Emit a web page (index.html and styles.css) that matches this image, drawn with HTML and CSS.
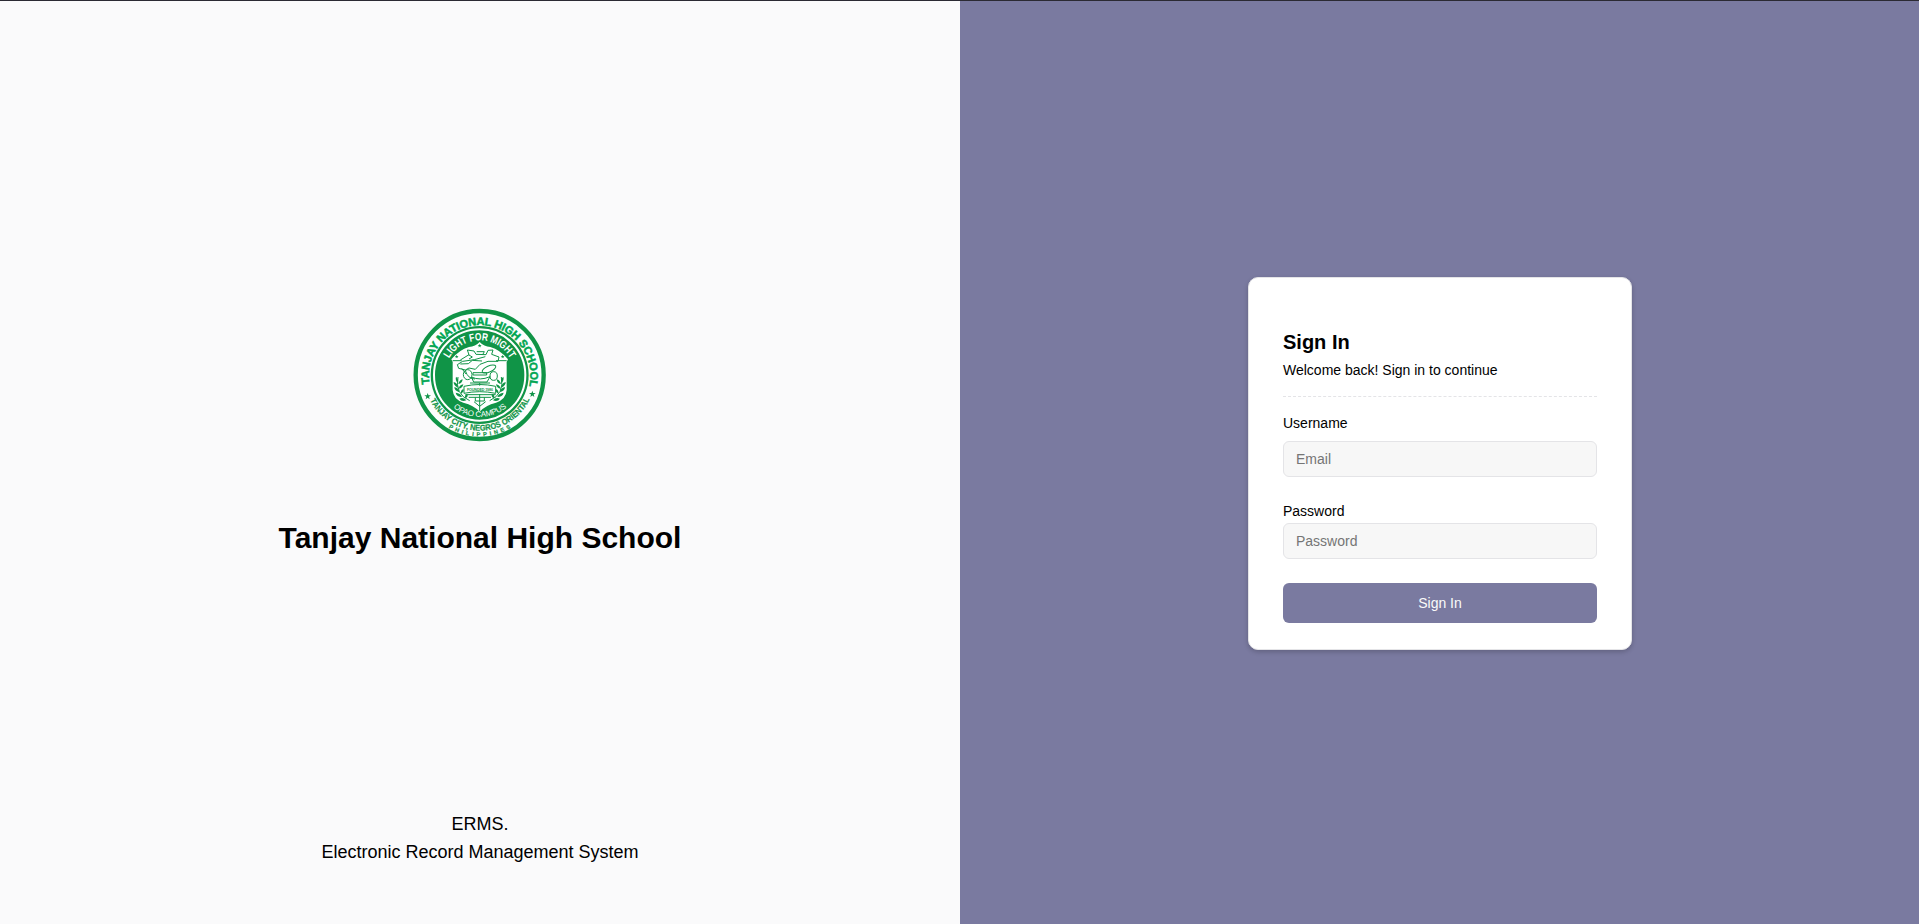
FILE: index.html
```html
<!DOCTYPE html>
<html lang="en">
<head>
<meta charset="utf-8">
<title>Tanjay National High School - Sign In</title>
<link rel="stylesheet" href="styles.css">
</head>
<body>
<main class="page">
  <section class="brand">
    <svg class="seal" viewBox="36 21 408 408" role="img" aria-label="School seal">
      <defs>
        <path id="arc-name" d="M90.500 260A152 152 0 1 1 387.500 260"/>
        <path id="arc-motto" d="M135 225A104 104 0 0 1 343 225"/>
        <path id="arc-city" d="M72 225A167 167 0 0 0 406 225"/>
        <path id="arc-country" d="M55 225A184 184 0 0 0 423 225"/>
        <path id="arc-campus" d="M113 225A126 126 0 0 0 365 225"/>
        <path id="star" d="M0-10 2.500-3H10L4 1.500 6 9 0 4.500-6 9-4 1.500-10-3H-2.500Z"/>
      </defs>
      <circle class="seal-paper seal-ring" cx="239" cy="225" r="192"/>
      <circle class="seal-green" cx="239" cy="225" r="147"/>
      <circle class="seal-gap" cx="239" cy="225" r="137"/>
      <path class="seal-white" d="M239 126Q226 140 207 141Q178 149 154 178Q160 185 158 196V270Q160 298 190 308Q222 316 239 335Q256 316 288 308Q318 298 320 270V196Q318 185 324 178Q300 149 271 141Q252 140 239 126Z"/>
      <g class="seal-line">
        <path d="M158 182H185M288 182H320"/>
        <path d="M181 180 207 164 202 150 222 153 228 163 258 164 264 151 279 150 275 163 297 171 294 184 264 184 240 193 226 208 207 204 196 210 176 205 172 194 188 184 223 179 256 170"/>
        <path d="M181 192 205 191 217 181 246 183M205 164 217 171 207 177M230 155 253 155 248 164M185 205 198 222M196 212Q204 237 225 237"/>
        <ellipse cx="267" cy="207" rx="22" ry="9" transform="rotate(-24 267 207)"/>
        <ellipse cx="203" cy="224" rx="13" ry="15"/><ellipse cx="281" cy="228" rx="11" ry="13"/>
        <path d="M219 218H260V225H219ZM214 231Q240 243 270 230L261 246H221Z"/>
        <path d="M192 259Q239 248 287 259V280Q239 270 192 280ZM239 249V257M210 249H270"/>
        <path d="M196 284H287M206 292H273M239 282V333M222 305 239 319 257 305M226 292V303H253V292"/>
        <path d="M174 231Q164 282 209 302M304 231Q314 282 269 302"/>
      </g>
      <g class="seal-leaves">
        <path d="M173 249Q165 240 168 230Q177 237 173 249M174 263Q160 256 161 246Q174 250 174 263M178 277Q163 272 163 261Q177 264 178 277M186 291Q170 291 167 278Q182 279 186 291M199 301Q185 307 178 296Q190 290 199 301M175 252Q178 240 188 238Q187 250 175 252M176 266Q179 254 190 253Q188 265 176 266M183 281Q181 271 190 267Q194 275 183 281M196 295Q192 285 202 282Q206 290 196 295"/>
        <path transform="matrix(-1 0 0 1 478 0)" d="M173 249Q165 240 168 230Q177 237 173 249M174 263Q160 256 161 246Q174 250 174 263M178 277Q163 272 163 261Q177 264 178 277M186 291Q170 291 167 278Q182 279 186 291M199 301Q185 307 178 296Q190 290 199 301M175 252Q178 240 188 238Q187 250 175 252M176 266Q179 254 190 253Q188 265 176 266M183 281Q181 271 190 267Q194 275 183 281M196 295Q192 285 202 282Q206 290 196 295"/>
        <use href="#star" transform="translate(83 289)"/>
        <use href="#star" transform="translate(397 282)"/>
        <use href="#star" transform="translate(239 137) scale(.6)"/>
        <use href="#star" transform="translate(170 170) scale(.55)"/>
        <use href="#star" transform="translate(308 170) scale(.55)"/>
      </g>
      <text class="seal-name"><textPath href="#arc-name" startOffset="8" textLength="534">TANJAY NATIONAL HIGH SCHOOL</textPath></text>
      <text class="seal-motto" textLength="224" lengthAdjust="spacingAndGlyphs"><textPath href="#arc-motto" startOffset="51">LIGHT FOR MIGHT</textPath></text>
      <text class="seal-city" textLength="370" lengthAdjust="spacingAndGlyphs"><textPath href="#arc-city" startOffset="79">TANJAY CITY, NEGROS ORIENTAL</textPath></text>
      <text class="seal-country"><textPath href="#arc-country" startOffset="191" textLength="196" lengthAdjust="spacing">PHILIPPINES</textPath></text>
      <text class="seal-campus"><textPath href="#arc-campus" startOffset="112" textLength="174">OPAO CAMPUS</textPath></text>
      <text class="seal-founded" x="240" y="274" textLength="78">FOUNDED 1986</text>
    </svg>
    <h1 class="school">Tanjay National High School</h1>
    <p class="system">ERMS.<br>Electronic Record Management System</p>
  </section>
  <section class="login">
    <form class="card">
      <header class="card-head">
        <h2 class="card-title">Sign In</h2>
        <p class="card-sub">Welcome back! Sign in to continue</p>
      </header>
      <hr class="rule">
      <label class="label" for="user">Username</label>
      <input class="field field-user" id="user" type="text" placeholder="Email">
      <label class="label" for="pass">Password</label>
      <input class="field field-pass" id="pass" type="password" placeholder="Password">
      <button class="submit" type="button">Sign In</button>
    </form>
  </section>
</main>
</body>
</html>
```

FILE: styles.css
```css
* { box-sizing: border-box; }
body, h1, h2, p { margin: 0; }
body { font-family: "Liberation Sans", Arial, sans-serif; color: #000; }
.page {
  display: grid;
  grid-template-columns: 960px 1fr;
  height: 924px;
  border-top: 1px solid #2b2a33;
  overflow: hidden;
}
.brand {
  display: flex;
  flex-direction: column;
  align-items: center;
  padding-top: 306px;
  background: #fafafb;
  text-align: center;
}
.seal { width: 136px; height: 136px; }
.school { margin-top: 77px; font-size: 30px; line-height: 36px; }
.system { margin-top: 254px; font-size: 18px; line-height: 28px; }
.login { background: #7a7aa0; padding: 276px 0 0 288px; }
.card {
  display: flex;
  flex-direction: column;
  width: 384px;
  height: 373px;
  padding: 52px 34px 0;
  background: #fff;
  border: 1px solid #e4e4e7;
  border-radius: 10px;
  box-shadow: 0 2px 5px rgba(0, 0, 0, .2);
}
.card-title { font-size: 20px; line-height: 24px; }
.card-sub { margin-top: 6px; font-size: 14px; line-height: 20px; }
.rule {
  width: 100%;
  margin: 16px 0;
  border: 0;
  border-top: 1px dashed #e4e4e7;
}
.label { font-size: 14px; line-height: 20px; }
.field {
  width: 100%;
  height: 36px;
  padding: 0 12px;
  border: 1px solid #e4e4e7;
  border-radius: 6px;
  background: #f7f7f7;
  font: 14px "Liberation Sans", Arial, sans-serif;
}
.field::placeholder { color: #757575; }
.field-user { margin: 8px 0 24px; }
.field-pass { margin: 2px 0 24px; }
.submit {
  height: 40px;
  border: 0;
  border-radius: 6px;
  background: #7a7aa0;
  color: #fafafa;
  font: 14px "Liberation Sans", Arial, sans-serif;
}
.seal-paper { fill: #fcfefc; }
.seal-ring { stroke: #109447; stroke-width: 13; }
.seal-green { fill: #109447; }
.seal-gap { fill: #109447; stroke: #fff; stroke-width: 6; }
.seal-white { fill: #fff; }
.seal-line { fill: none; stroke: #109447; stroke-width: 3; }
.seal-leaves { fill: #109447; }
.seal text { font-family: "Liberation Sans", Arial, sans-serif; font-weight: bold; }
.seal-name { font-size: 33px; fill: #00a651; stroke: #00a651; stroke-width: 1.5; }
.seal-motto { font-size: 32px; fill: #fff; }
.seal-city { font-size: 25px; fill: #109447; stroke: #109447; stroke-width: .6; }
.seal-country { font-size: 17px; fill: #109447; stroke: #109447; stroke-width: .6; }
.seal .seal-campus { font-size: 24px; font-weight: normal; fill: #fff; }
.seal-founded { font-size: 11px; fill: #109447; text-anchor: middle; }
```
